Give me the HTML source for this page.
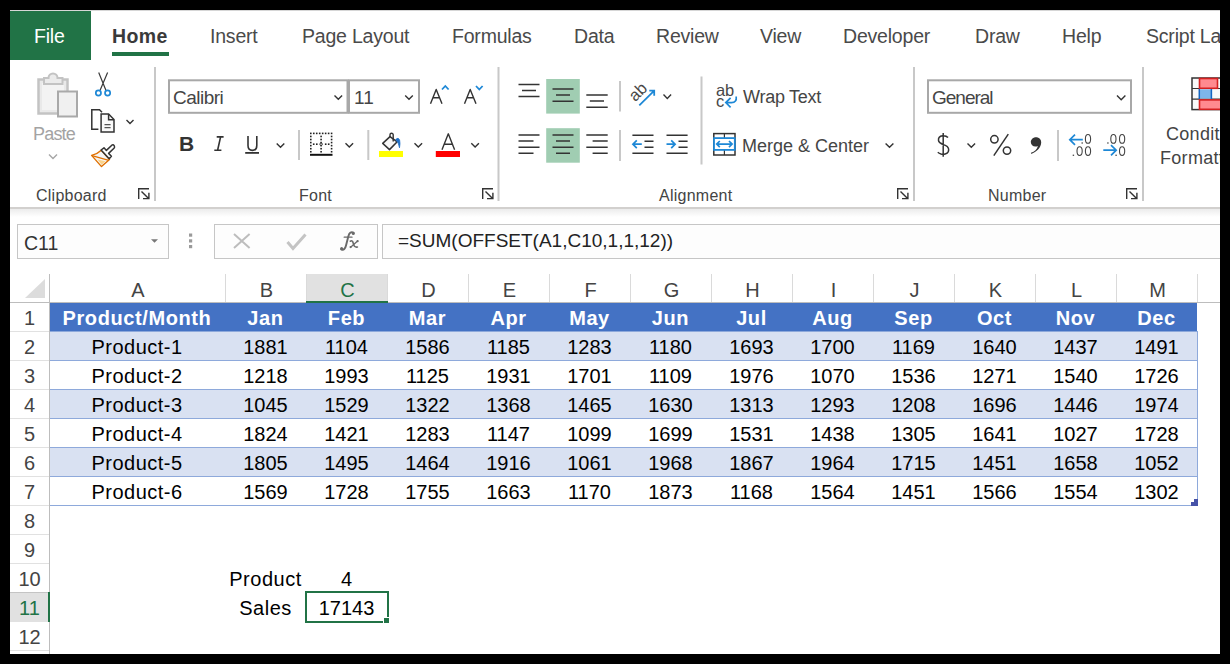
<!DOCTYPE html>
<html><head><meta charset="utf-8">
<style>
*{margin:0;padding:0;box-sizing:border-box}
html,body{width:1230px;height:664px;overflow:hidden;background:#000}
body{font-family:"Liberation Sans",sans-serif;position:relative}
.a{position:absolute;white-space:nowrap}
#app{position:absolute;left:10px;top:10px;width:1210px;height:644px;background:#fff;overflow:hidden}
.tab{position:absolute;white-space:nowrap;top:25px;font-size:19.5px;letter-spacing:-0.2px;color:#4a4a4a;line-height:22px}
.glabel{position:absolute;white-space:nowrap;top:187px;font-size:16px;letter-spacing:0.25px;color:#444;line-height:18px}
.sep{position:absolute;width:2px;background:#c8c8c8}
.cell{position:absolute;font-size:20px;line-height:33px;text-align:center;color:#000}
.ch{position:absolute;top:274px;height:28px;font-size:20px;line-height:32px;text-align:center;color:#444;border-left:1px solid #dadada}
.rh{position:absolute;left:10px;width:39px;height:29px;font-size:20px;line-height:30px;text-align:center;color:#444;border-top:1px solid #e1e1e1}
</style></head><body>
<div id="app"></div>
<!-- top strip -->
<div class="a" style="left:10px;top:10px;width:1210px;height:1px;background:#d6d6d6"></div>
<!-- File tab -->
<div class="a" style="left:10px;top:11px;width:81px;height:49px;background:#217346"></div>
<div class="tab" style="left:34px;color:#fff">File</div>
<div class="tab" style="left:112px;font-weight:bold;color:#3a3a3a;letter-spacing:0.4px">Home</div>
<div class="a" style="left:112px;top:52px;width:57px;height:4px;background:#217346"></div>
<div class="tab" style="left:210px">Insert</div>
<div class="tab" style="left:302px">Page Layout</div>
<div class="tab" style="left:452px">Formulas</div>
<div class="tab" style="left:574px">Data</div>
<div class="tab" style="left:656px">Review</div>
<div class="tab" style="left:760px">View</div>
<div class="tab" style="left:843px">Developer</div>
<div class="tab" style="left:975px">Draw</div>
<div class="tab" style="left:1062px">Help</div>
<div class="tab" style="left:1146px">Script Lab</div>

<!-- ribbon bottom -->
<div class="a" style="left:10px;top:207px;width:1210px;height:2px;background:#d2d0ce"></div>
<div class="a" style="left:10px;top:209px;width:1210px;height:8px;background:linear-gradient(#ececec,#fff)"></div>

<!--RIBBON-->
<svg class="a" style="left:0;top:0" width="1220" height="270" viewBox="0 0 1220 270">
<g fill="none" stroke-linecap="butt">
<!-- paste -->
<rect x="38.5" y="79.5" width="29" height="34" fill="#e9e9e9" stroke="#c3c3c3" stroke-width="2.5"/>
<rect x="42" y="83" width="22" height="27" fill="#f3f3f3"/>
<path d="M44 84 V78 H48.5 A4.5 4.5 0 0 1 57.5 78 H62.5 V84 Z" fill="#ebebeb" stroke="#c3c3c3" stroke-width="2"/>
<rect x="58" y="91.5" width="19" height="25" fill="#f0f0f0" stroke="#a9a9a9" stroke-width="2"/>
<path d="M49 154.5 L53 158.5 L57 154.5" stroke="#a6a6a6" stroke-width="1.4"/>
<!-- scissors -->
<path d="M98.7 72.5 L106 90.5 M107.6 72.5 L100 90.5" stroke="#3a3a3a" stroke-width="1.2"/>
<circle cx="98.4" cy="93" r="2.6" stroke="#1e88d6" stroke-width="1.7"/>
<circle cx="107.6" cy="93" r="2.6" stroke="#1e88d6" stroke-width="1.7"/>
<!-- copy -->
<path d="M98.4 129.2 H91.8 V109.8 H99.5 L102 112.3" stroke="#333" stroke-width="1.5"/>
<path d="M101.1 114 H108.6 L114 119.5 V132 H101.1 Z" fill="#fafafa" stroke="#333" stroke-width="1.5"/>
<path d="M108.6 114 V119.7 H114" stroke="#333" stroke-width="1.5"/>
<path d="M104.5 124.7 H110.6 M104.5 127.7 H110.6" stroke="#555" stroke-width="1.2"/>
<path d="M126.5 120 L130 123.5 L133.5 120" stroke="#333" stroke-width="1.4"/>
<!-- format painter -->
<path d="M101.3 150.3 C98.5 153 95.5 154.6 91.6 155.4 L101.5 166.6 L109.5 159.5 Z" fill="#f6f6f6" stroke="#e07000" stroke-width="1.4" stroke-linejoin="round"/>
<path d="M97.5 159.4 L105.5 161.3 L101.6 164.8 Z" fill="#fbd38a"/>
<path d="M92 155.7 L108.8 160.3" stroke="#e07000" stroke-width="1.3"/>
<path d="M101.1 150 L104 147.8 L106.4 150.4 L111.8 145.2 Q113.2 144.2 114.3 145.8 Q115 147 114 148.2 L108.6 153.4 L111.4 156.2 L109.2 158.8 Z" fill="#fff" stroke="#333" stroke-width="1.5" stroke-linejoin="round"/>
<!-- launchers -->
<g stroke="#333" stroke-width="1.4">
<path d="M138.7 199 V188.7 H149 M141.5 191.5 L148.6 198.6 M143 198.6 H148.9 V192.7"/>
<path d="M482.7 199 V188.7 H493 M485.5 191.5 L492.6 198.6 M487 198.6 H492.9 V192.7"/>
<path d="M897.7 199 V188.7 H908 M900.5 191.5 L907.6 198.6 M902 198.6 H907.9 V192.7"/>
<path d="M1126.7 199 V188.7 H1137 M1129.5 191.5 L1136.6 198.6 M1131 198.6 H1136.9 V192.7"/>
</g>
<!-- separators -->
<g fill="#c8c8c8">
<rect x="154" y="67" width="2" height="134"/>
<rect x="497.5" y="67" width="2" height="134"/>
<rect x="913" y="67" width="2" height="134"/>
<rect x="1142" y="67" width="2" height="134"/>
<rect x="298" y="130" width="2" height="30"/>
<rect x="367.3" y="130" width="2" height="30"/>
<rect x="619" y="81" width="2" height="30.5"/>
<rect x="619" y="130" width="2" height="31"/>
<rect x="700.5" y="76.5" width="2" height="88"/>
<rect x="1057" y="130" width="2" height="31"/>
</g>
<!-- font boxes -->
<rect x="169" y="80.3" width="178.5" height="32.5" fill="#fff" stroke="#a8a8a8" stroke-width="2"/>
<rect x="349" y="80.3" width="70" height="32.5" fill="#fff" stroke="#a8a8a8" stroke-width="2"/>
<path d="M334.5 95.5 L338.3 99.3 L342.1 95.5" stroke="#333" stroke-width="1.4"/>
<path d="M405.2 95.5 L409 99.3 L412.8 95.5" stroke="#333" stroke-width="1.4"/>
<!-- grow / shrink -->
<path d="M430.5 103.8 L436.2 89.5 L442 103.8 M432.8 97.8 H439.6" stroke="#333" stroke-width="1.4" stroke-linejoin="round"/>
<path d="M442 89.5 L445.3 86 L448.6 89.5" stroke="#1e88d6" stroke-width="1.8"/>
<path d="M464.5 103.8 L470.2 89.5 L476 103.8 M466.8 97.8 H473.6" stroke="#333" stroke-width="1.4" stroke-linejoin="round"/>
<path d="M476 86 L479.3 89.5 L482.6 86" stroke="#1e88d6" stroke-width="1.8"/>
<!-- U chevron -->
<path d="M245.2 152.9 H259" stroke="#333" stroke-width="1.8"/>
<path d="M276.7 143.5 L280.5 147.3 L284.3 143.5" stroke="#333" stroke-width="1.4"/>
<!-- I U -->
<path d="M216.7 136.9 H223.6 M214.3 150.2 H221.4 M220.6 136.9 L217.6 150.2" stroke="#333" stroke-width="1.6"/>
<path d="M248 136 V145.5 Q248 150.4 252.4 150.4 Q256.8 150.4 256.8 145.5 V136" stroke="#333" stroke-width="1.6"/>
<!-- $ % , -->
<path d="M948 137.6 C946.5 135.8 944.5 135.5 942.5 135.7 C939.5 136 938.3 138.2 938.5 140.4 C938.8 143.3 942.5 144.2 945.3 145.4 C948.6 146.8 949.2 149.5 948.3 151.6 C947.2 154 943.5 154.6 941 154 C939.5 153.6 938.5 153 937.8 152.3 M943.2 132.9 V156.8" stroke="#333" stroke-width="1.5"/>
<circle cx="994.4" cy="139.3" r="3.7" stroke="#333" stroke-width="1.5"/>
<circle cx="1007" cy="150.6" r="3.7" stroke="#333" stroke-width="1.5"/>
<path d="M1008.3 134.2 L993.8 155.6" stroke="#333" stroke-width="1.5"/>
<path d="M1031.3 154 C1036.5 151.8 1041 148 1041.2 142.5 C1041.3 139.3 1039 137.2 1036 137.2 C1033 137.2 1030.8 139.4 1030.8 142 C1030.8 144.6 1032.8 146.5 1035.4 146.5 C1036.4 146.5 1037.2 146.3 1037.9 145.9 C1037.2 149.2 1034.7 151.5 1031 152.8 Z" fill="#333" stroke="none"/>
<!-- borders -->
<g fill="#222" stroke="none"><rect x="310.00" y="132.60" width="1.6" height="1.6"/><rect x="310.00" y="135.66" width="1.6" height="1.6"/><rect x="310.00" y="138.72" width="1.6" height="1.6"/><rect x="310.00" y="141.78" width="1.6" height="1.6"/><rect x="310.00" y="144.84" width="1.6" height="1.6"/><rect x="310.00" y="147.90" width="1.6" height="1.6"/><rect x="310.00" y="150.96" width="1.6" height="1.6"/><rect x="312.90" y="143.40" width="1.6" height="1.6"/><rect x="312.97" y="132.60" width="1.6" height="1.6"/><rect x="315.94" y="132.60" width="1.6" height="1.6"/><rect x="316.00" y="143.40" width="1.6" height="1.6"/><rect x="318.91" y="132.60" width="1.6" height="1.6"/><rect x="320.30" y="135.66" width="1.6" height="1.6"/><rect x="320.30" y="138.72" width="1.6" height="1.6"/><rect x="320.30" y="141.78" width="1.6" height="1.6"/><rect x="320.30" y="144.84" width="1.6" height="1.6"/><rect x="320.30" y="147.90" width="1.6" height="1.6"/><rect x="320.30" y="150.96" width="1.6" height="1.6"/><rect x="321.88" y="132.60" width="1.6" height="1.6"/><rect x="324.85" y="132.60" width="1.6" height="1.6"/><rect x="324.90" y="143.40" width="1.6" height="1.6"/><rect x="327.82" y="132.60" width="1.6" height="1.6"/><rect x="327.90" y="143.40" width="1.6" height="1.6"/><rect x="330.79" y="132.60" width="1.6" height="1.6"/><rect x="330.79" y="135.66" width="1.6" height="1.6"/><rect x="330.79" y="138.72" width="1.6" height="1.6"/><rect x="330.79" y="141.78" width="1.6" height="1.6"/><rect x="330.79" y="144.84" width="1.6" height="1.6"/><rect x="330.79" y="147.90" width="1.6" height="1.6"/><rect x="330.79" y="150.96" width="1.6" height="1.6"/></g>
<circle cx="321.1" cy="144.2" r="1.3" fill="none" stroke="#333" stroke-width="0.9"/>
<path d="M310 154.8 H332.5" stroke="#111" stroke-width="2"/>
<path d="M345.5 143.3 L349.3 147.1 L353.1 143.3" stroke="#333" stroke-width="1.4"/>
<!-- fill color -->
<path d="M382.7 143.4 L390 136.6 L397.2 141.8 L389.5 149.6 Z" fill="#f7f7f7" stroke="#333" stroke-width="1.5" stroke-linejoin="round"/>
<path d="M390 137 V134.8 A1.6 1.6 0 0 1 393.2 134.8 V141.4" stroke="#333" stroke-width="1.4"/>
<path d="M395.6 139.6 Q398.3 136.8 399.6 139.8 Q400.4 143.5 399.5 147.8 Q398.6 142 395.6 139.6 Z" fill="#1e6fc8" stroke="#1e6fc8" stroke-width="0.8"/>
<rect x="379" y="151" width="24" height="6" fill="#ffff00"/>
<path d="M414.5 143.3 L418.3 147.1 L422.1 143.3" stroke="#333" stroke-width="1.4"/>
<!-- font color -->
<path d="M442 149.7 L448.3 133.8 L454.6 149.7 M444.3 144.3 H452.3" stroke="#333" stroke-width="1.4" stroke-linejoin="round"/>
<rect x="435.8" y="151" width="24.2" height="6" fill="#ff0000"/>
<path d="M471.3 143.3 L475.1 147.1 L478.9 143.3" stroke="#333" stroke-width="1.4"/>
<!-- alignment top row -->
<rect x="546.2" y="79" width="33.6" height="34.6" fill="#a0cdb2"/>
<rect x="546.2" y="128.2" width="33.6" height="34.5" fill="#a0cdb2"/>
<g stroke="#333" stroke-width="1.5">
<path d="M518.5 84.6 H539.5 M522 90.6 H536 M518.5 96.6 H539.5"/>
<path d="M552.5 89 H573.5 M556 95 H570 M552.5 101.2 H573.5"/>
<path d="M586.3 94.9 H607.7 M589.8 100.9 H604 M586.3 107.2 H607.7"/>
<path d="M518.5 135 H539.5 M518.5 141 H533.5 M518.5 147.2 H539.5 M518.5 153.2 H533.5"/>
<path d="M552.5 135 H573.5 M556 141 H570 M552.5 147.2 H573.5 M556 153.2 H570"/>
<path d="M586.3 135 H607.7 M592.6 141 H607.7 M586.3 147.2 H607.7 M592.6 153.2 H607.7"/>
<path d="M632.4 135.2 H653.5 M644.5 141.3 H653.5 M644.5 147.3 H653.5 M632.4 153.2 H653.5"/>
<path d="M666.5 135.2 H687.6 M678.5 141.3 H687.6 M678.5 147.3 H687.6 M666.5 153.2 H687.6"/>
</g>
<g stroke="#1e88d6" stroke-width="1.7">
<path d="M633 144.2 H641.8 M636.8 140.3 L632.9 144.2 L636.8 148.1"/>
<path d="M666.5 144.2 H675 M671.2 140.3 L675.1 144.2 L671.2 148.1"/>
</g>
<!-- orientation -->
<text x="0" y="0" transform="translate(635.3,102.3) rotate(-45)" font-family="Liberation Sans" font-size="16.5" fill="#484848" stroke="none">ab</text>
<path d="M639.3 105.3 L654 90.8 M649.3 90.6 H654.2 V95.7" stroke="#1e88d6" stroke-width="1.8"/>
<path d="M663.5 94.6 L667.3 98.4 L671.1 94.6" stroke="#333" stroke-width="1.4"/>
<!-- wrap text -->
<text x="716" y="95.6" font-family="Liberation Sans" font-size="16.5" letter-spacing="-0.2" fill="#484848" stroke="none">ab</text>
<text x="716" y="106.7" font-family="Liberation Sans" font-size="16.5" fill="#484848" stroke="none">c</text>
<path d="M736.2 96.5 Q737 102.6 731.5 102.6 H726 M730.6 97.8 L725.8 102.6 L730.6 107.3" stroke="#1e88d6" stroke-width="1.7"/>
<!-- merge -->
<rect x="713.8" y="133.6" width="21.2" height="21.4" fill="#fff" stroke="#333" stroke-width="1.5"/>
<path d="M724.4 133.6 V155" stroke="#333" stroke-width="1.2"/>
<rect x="714" y="138.1" width="20.8" height="11.8" fill="#fff" stroke="#1e88d6" stroke-width="1.8"/>
<path d="M716.8 144.1 H732 M719.8 141 L716.7 144.1 L719.8 147.2 M729 141 L732.1 144.1 L729 147.2" stroke="#1e88d6" stroke-width="1.7"/>
<path d="M885.6 143.4 L889.5 147.3 L893.4 143.4" stroke="#333" stroke-width="1.4"/>
<!-- number -->
<rect x="928" y="80.3" width="203" height="32.5" fill="#fff" stroke="#a8a8a8" stroke-width="2"/>
<path d="M1117 95.5 L1121.2 99.7 L1125.4 95.5" stroke="#333" stroke-width="1.4"/>
<path d="M967.5 143.5 L971.3 147.3 L975.1 143.5" stroke="#333" stroke-width="1.4"/>
<g stroke="#1e88d6" stroke-width="1.7">
<path d="M1069.8 139.7 H1082.8 M1075 134.6 L1069.8 139.7 L1075 144.8"/>
<path d="M1103.3 150.2 H1116.2 M1111 145.1 L1116.2 150.2 L1111 155.3"/>
</g>
<g stroke="#444" stroke-width="1.1" fill="none">
<ellipse cx="1088" cy="138.9" rx="2.6" ry="4.4"/>
<ellipse cx="1079.6" cy="151.1" rx="2.6" ry="4.4"/>
<ellipse cx="1088" cy="151.1" rx="2.6" ry="4.4"/>
<ellipse cx="1113.4" cy="138.9" rx="2.6" ry="4.4"/>
<ellipse cx="1122.1" cy="138.9" rx="2.6" ry="4.4"/>
<ellipse cx="1122.1" cy="151.1" rx="2.6" ry="4.4"/>
</g>
<g fill="#555" stroke="none">
<rect x="1081.5" y="142.3" width="1.4" height="1.4"/>
<rect x="1072.7" y="154.6" width="1.4" height="1.4"/>
<rect x="1107.2" y="142.3" width="1.4" height="1.4"/>
<rect x="1115.4" y="154.6" width="1.4" height="1.4"/>
</g>
<!-- CF -->
<rect x="1192" y="78" width="30" height="31.6" fill="#f8f8f8" stroke="#333" stroke-width="1.5"/>
<path d="M1192 88.5 H1222 M1192 99.2 H1222" stroke="#333" stroke-width="1.2"/>
<rect x="1199.5" y="78.5" width="18" height="9.8" fill="#ff8a8f" stroke="#d42020" stroke-width="1.6"/>
<rect x="1199.3" y="89.3" width="12" height="9.2" fill="#7db6ea" stroke="none"/>
<path d="M1199.3 89 V99 M1211.4 89 V99" stroke="#1565c0" stroke-width="1.5"/>
<rect x="1199.5" y="99.9" width="24" height="9.4" fill="#ff8a8f" stroke="#d42020" stroke-width="1.6"/>
</g>
</svg>
<div class="a" style="left:173px;top:87px;font-size:19px;letter-spacing:-0.5px;color:#454545">Calibri</div>
<div class="a" style="left:354px;top:87px;font-size:19px;color:#454545">11</div>
<div class="a" style="left:179px;top:132px;font-size:21px;font-weight:bold;color:#333">B</div>
<div class="a" style="left:33px;top:124px;font-size:18px;letter-spacing:-0.8px;color:#a3a3a3">Paste</div>
<div class="a" style="left:743px;top:87px;font-size:18px;letter-spacing:-0.25px;color:#454545">Wrap Text</div>
<div class="a" style="left:742px;top:136px;font-size:18px;color:#454545">Merge &amp; Center</div>
<div class="a" style="left:932px;top:87px;font-size:19px;letter-spacing:-1px;color:#454545">General</div>
<div class="a" style="left:1166px;top:124px;font-size:18px;letter-spacing:0.3px;color:#444">Conditional</div>
<div class="a" style="left:1160px;top:148px;font-size:18px;letter-spacing:0.3px;color:#444">Formatting</div>
<!--/RIBBON-->
<!-- group labels -->
<div class="glabel" style="left:36px">Clipboard</div>
<div class="glabel" style="left:299px">Font</div>
<div class="glabel" style="left:659px">Alignment</div>
<div class="glabel" style="left:988px">Number</div>

<!-- formula bar -->
<div class="a" style="left:17px;top:224px;width:152px;height:35px;border:1px solid #c6c6c6;background:#fdfdfd"></div>
<div class="a" style="left:24px;top:232px;font-size:19.5px;color:#333">C11</div>
<div class="a" style="left:214px;top:224px;width:164px;height:35px;border:1px solid #c6c6c6;background:#fdfdfd"></div>
<div class="a" style="left:382px;top:224px;width:845px;height:35px;border:1px solid #c6c6c6;background:#fdfdfd"></div>
<div class="a" style="left:398px;top:230px;font-size:19px;color:#222">=SUM(OFFSET(A1,C10,1,1,12))</div>

<!-- sheet -->
<!--SHEET-->
<div class="a" style="left:10px;top:274px;width:39px;height:28px;background:#fff"></div>
<svg class="a" style="left:20px;top:278px" width="26" height="22"><polygon points="25,1 25,20 5,20" fill="#dcdcdc"/></svg>
<div class="ch" style="left:49px;width:177px;">A</div>
<div class="ch" style="left:225px;width:82px;">B</div>
<div class="ch" style="left:306px;width:82px;background:#e1e1e1;color:#217346;">C</div>
<div class="ch" style="left:387px;width:82px;">D</div>
<div class="ch" style="left:468px;width:82px;">E</div>
<div class="ch" style="left:549px;width:82px;">F</div>
<div class="ch" style="left:630px;width:82px;">G</div>
<div class="ch" style="left:711px;width:82px;">H</div>
<div class="ch" style="left:792px;width:82px;">I</div>
<div class="ch" style="left:873px;width:82px;">J</div>
<div class="ch" style="left:954px;width:82px;">K</div>
<div class="ch" style="left:1035px;width:82px;">L</div>
<div class="ch" style="left:1116px;width:82px;">M</div>
<div class="a" style="left:1197px;top:274px;width:1px;height:28px;background:#dadada"></div>
<div class="a" style="left:10px;top:302px;width:1210px;height:1px;background:#bdbdbd"></div>
<div class="a" style="left:306px;top:301px;width:82px;height:2px;background:#217346"></div>
<div class="a" style="left:49px;top:274px;width:1px;height:380px;background:#bdbdbd"></div>
<div class="rh" style="top:302px;border-top-color:#bdbdbd;">1</div>
<div class="rh" style="top:331px;">2</div>
<div class="rh" style="top:360px;">3</div>
<div class="rh" style="top:389px;">4</div>
<div class="rh" style="top:418px;">5</div>
<div class="rh" style="top:447px;">6</div>
<div class="rh" style="top:476px;">7</div>
<div class="rh" style="top:505px;">8</div>
<div class="rh" style="top:534px;">9</div>
<div class="rh" style="top:563px;">10</div>
<div class="rh" style="top:592px;background:#e1e1e1;color:#217346;border-top-color:#c4c4c4;border-bottom:1px solid #c4c4c4;height:30px;">11</div>
<div class="rh" style="top:621px;">12</div>
<div class="a" style="left:10px;top:650px;width:39px;height:1px;background:#e1e1e1"></div>
<div class="a" style="left:48px;top:592px;width:2px;height:30px;background:#217346"></div>
<div class="a" style="left:50px;top:303px;width:1147px;height:28px;background:#4472c4"></div>
<div class="cell" style="left:49px;top:302px;width:176px;color:#fff;font-weight:bold;letter-spacing:0.6px;">Product/Month</div>
<div class="cell" style="left:225px;top:302px;width:81px;color:#fff;font-weight:bold;letter-spacing:0.6px;">Jan</div>
<div class="cell" style="left:306px;top:302px;width:81px;color:#fff;font-weight:bold;letter-spacing:0.6px;">Feb</div>
<div class="cell" style="left:387px;top:302px;width:81px;color:#fff;font-weight:bold;letter-spacing:0.6px;">Mar</div>
<div class="cell" style="left:468px;top:302px;width:81px;color:#fff;font-weight:bold;letter-spacing:0.6px;">Apr</div>
<div class="cell" style="left:549px;top:302px;width:81px;color:#fff;font-weight:bold;letter-spacing:0.6px;">May</div>
<div class="cell" style="left:630px;top:302px;width:81px;color:#fff;font-weight:bold;letter-spacing:0.6px;">Jun</div>
<div class="cell" style="left:711px;top:302px;width:81px;color:#fff;font-weight:bold;letter-spacing:0.6px;">Jul</div>
<div class="cell" style="left:792px;top:302px;width:81px;color:#fff;font-weight:bold;letter-spacing:0.6px;">Aug</div>
<div class="cell" style="left:873px;top:302px;width:81px;color:#fff;font-weight:bold;letter-spacing:0.6px;">Sep</div>
<div class="cell" style="left:954px;top:302px;width:81px;color:#fff;font-weight:bold;letter-spacing:0.6px;">Oct</div>
<div class="cell" style="left:1035px;top:302px;width:81px;color:#fff;font-weight:bold;letter-spacing:0.6px;">Nov</div>
<div class="cell" style="left:1116px;top:302px;width:81px;color:#fff;font-weight:bold;letter-spacing:0.6px;">Dec</div>
<div class="a" style="left:50px;top:332px;width:1147px;height:28px;background:#d9e1f2"></div>
<div class="a" style="left:50px;top:331px;width:1147px;height:1px;background:#8ea9db"></div>
<div class="cell" style="left:49px;top:331px;width:176px;letter-spacing:0.5px;">Product-1</div>
<div class="cell" style="left:225px;top:331px;width:81px;">1881</div>
<div class="cell" style="left:306px;top:331px;width:81px;">1104</div>
<div class="cell" style="left:387px;top:331px;width:81px;">1586</div>
<div class="cell" style="left:468px;top:331px;width:81px;">1185</div>
<div class="cell" style="left:549px;top:331px;width:81px;">1283</div>
<div class="cell" style="left:630px;top:331px;width:81px;">1180</div>
<div class="cell" style="left:711px;top:331px;width:81px;">1693</div>
<div class="cell" style="left:792px;top:331px;width:81px;">1700</div>
<div class="cell" style="left:873px;top:331px;width:81px;">1169</div>
<div class="cell" style="left:954px;top:331px;width:81px;">1640</div>
<div class="cell" style="left:1035px;top:331px;width:81px;">1437</div>
<div class="cell" style="left:1116px;top:331px;width:81px;">1491</div>
<div class="a" style="left:50px;top:361px;width:1147px;height:28px;background:#ffffff"></div>
<div class="a" style="left:50px;top:360px;width:1147px;height:1px;background:#8ea9db"></div>
<div class="cell" style="left:49px;top:360px;width:176px;letter-spacing:0.5px;">Product-2</div>
<div class="cell" style="left:225px;top:360px;width:81px;">1218</div>
<div class="cell" style="left:306px;top:360px;width:81px;">1993</div>
<div class="cell" style="left:387px;top:360px;width:81px;">1125</div>
<div class="cell" style="left:468px;top:360px;width:81px;">1931</div>
<div class="cell" style="left:549px;top:360px;width:81px;">1701</div>
<div class="cell" style="left:630px;top:360px;width:81px;">1109</div>
<div class="cell" style="left:711px;top:360px;width:81px;">1976</div>
<div class="cell" style="left:792px;top:360px;width:81px;">1070</div>
<div class="cell" style="left:873px;top:360px;width:81px;">1536</div>
<div class="cell" style="left:954px;top:360px;width:81px;">1271</div>
<div class="cell" style="left:1035px;top:360px;width:81px;">1540</div>
<div class="cell" style="left:1116px;top:360px;width:81px;">1726</div>
<div class="a" style="left:50px;top:390px;width:1147px;height:28px;background:#d9e1f2"></div>
<div class="a" style="left:50px;top:389px;width:1147px;height:1px;background:#8ea9db"></div>
<div class="cell" style="left:49px;top:389px;width:176px;letter-spacing:0.5px;">Product-3</div>
<div class="cell" style="left:225px;top:389px;width:81px;">1045</div>
<div class="cell" style="left:306px;top:389px;width:81px;">1529</div>
<div class="cell" style="left:387px;top:389px;width:81px;">1322</div>
<div class="cell" style="left:468px;top:389px;width:81px;">1368</div>
<div class="cell" style="left:549px;top:389px;width:81px;">1465</div>
<div class="cell" style="left:630px;top:389px;width:81px;">1630</div>
<div class="cell" style="left:711px;top:389px;width:81px;">1313</div>
<div class="cell" style="left:792px;top:389px;width:81px;">1293</div>
<div class="cell" style="left:873px;top:389px;width:81px;">1208</div>
<div class="cell" style="left:954px;top:389px;width:81px;">1696</div>
<div class="cell" style="left:1035px;top:389px;width:81px;">1446</div>
<div class="cell" style="left:1116px;top:389px;width:81px;">1974</div>
<div class="a" style="left:50px;top:419px;width:1147px;height:28px;background:#ffffff"></div>
<div class="a" style="left:50px;top:418px;width:1147px;height:1px;background:#8ea9db"></div>
<div class="cell" style="left:49px;top:418px;width:176px;letter-spacing:0.5px;">Product-4</div>
<div class="cell" style="left:225px;top:418px;width:81px;">1824</div>
<div class="cell" style="left:306px;top:418px;width:81px;">1421</div>
<div class="cell" style="left:387px;top:418px;width:81px;">1283</div>
<div class="cell" style="left:468px;top:418px;width:81px;">1147</div>
<div class="cell" style="left:549px;top:418px;width:81px;">1099</div>
<div class="cell" style="left:630px;top:418px;width:81px;">1699</div>
<div class="cell" style="left:711px;top:418px;width:81px;">1531</div>
<div class="cell" style="left:792px;top:418px;width:81px;">1438</div>
<div class="cell" style="left:873px;top:418px;width:81px;">1305</div>
<div class="cell" style="left:954px;top:418px;width:81px;">1641</div>
<div class="cell" style="left:1035px;top:418px;width:81px;">1027</div>
<div class="cell" style="left:1116px;top:418px;width:81px;">1728</div>
<div class="a" style="left:50px;top:448px;width:1147px;height:28px;background:#d9e1f2"></div>
<div class="a" style="left:50px;top:447px;width:1147px;height:1px;background:#8ea9db"></div>
<div class="cell" style="left:49px;top:447px;width:176px;letter-spacing:0.5px;">Product-5</div>
<div class="cell" style="left:225px;top:447px;width:81px;">1805</div>
<div class="cell" style="left:306px;top:447px;width:81px;">1495</div>
<div class="cell" style="left:387px;top:447px;width:81px;">1464</div>
<div class="cell" style="left:468px;top:447px;width:81px;">1916</div>
<div class="cell" style="left:549px;top:447px;width:81px;">1061</div>
<div class="cell" style="left:630px;top:447px;width:81px;">1968</div>
<div class="cell" style="left:711px;top:447px;width:81px;">1867</div>
<div class="cell" style="left:792px;top:447px;width:81px;">1964</div>
<div class="cell" style="left:873px;top:447px;width:81px;">1715</div>
<div class="cell" style="left:954px;top:447px;width:81px;">1451</div>
<div class="cell" style="left:1035px;top:447px;width:81px;">1658</div>
<div class="cell" style="left:1116px;top:447px;width:81px;">1052</div>
<div class="a" style="left:50px;top:477px;width:1147px;height:28px;background:#ffffff"></div>
<div class="a" style="left:50px;top:476px;width:1147px;height:1px;background:#8ea9db"></div>
<div class="cell" style="left:49px;top:476px;width:176px;letter-spacing:0.5px;">Product-6</div>
<div class="cell" style="left:225px;top:476px;width:81px;">1569</div>
<div class="cell" style="left:306px;top:476px;width:81px;">1728</div>
<div class="cell" style="left:387px;top:476px;width:81px;">1755</div>
<div class="cell" style="left:468px;top:476px;width:81px;">1663</div>
<div class="cell" style="left:549px;top:476px;width:81px;">1170</div>
<div class="cell" style="left:630px;top:476px;width:81px;">1873</div>
<div class="cell" style="left:711px;top:476px;width:81px;">1168</div>
<div class="cell" style="left:792px;top:476px;width:81px;">1564</div>
<div class="cell" style="left:873px;top:476px;width:81px;">1451</div>
<div class="cell" style="left:954px;top:476px;width:81px;">1566</div>
<div class="cell" style="left:1035px;top:476px;width:81px;">1554</div>
<div class="cell" style="left:1116px;top:476px;width:81px;">1302</div>
<div class="a" style="left:50px;top:505px;width:1147px;height:1px;background:#8ea9db"></div>
<div class="a" style="left:1197px;top:331px;width:1px;height:175px;background:#8ea9db"></div>
<div class="a" style="left:1191px;top:502px;width:7px;height:4px;background:#4652a8"></div>
<div class="a" style="left:1194px;top:499px;width:4px;height:4px;background:#4652a8"></div>
<div class="cell" style="left:225px;top:563px;width:81px;letter-spacing:0.5px">Product</div>
<div class="cell" style="left:306px;top:563px;width:81px">4</div>
<div class="cell" style="left:225px;top:592px;width:81px;letter-spacing:0.5px">Sales</div>
<div class="cell" style="left:306px;top:592px;width:81px">17143</div>
<div class="a" style="left:305px;top:591px;width:84px;height:32px;border:2px solid #217346"></div>
<div class="a" style="left:383px;top:617px;width:7px;height:7px;background:#217346;border:1px solid #fff"></div>
<!--/SHEET-->
<!--FBAR-->
<svg class="a" style="left:0;top:215px" width="400" height="50" viewBox="0 215 400 50">
<path d="M151 239.3 H158 L154.5 242.8 Z" fill="#777"/>
<rect x="189" y="233.5" width="3.2" height="3.2" fill="#9a9a9a"/>
<rect x="189" y="239.3" width="3.2" height="3.2" fill="#9a9a9a"/>
<rect x="189" y="245" width="3.2" height="3.2" fill="#9a9a9a"/>
<path d="M234 234 L249.6 248 M249.6 234 L234 248" stroke="#bdbdbd" stroke-width="2" fill="none"/>
<path d="M287.5 242 L293 248.5 L305.5 234.5" stroke="#c4c4c4" stroke-width="3" fill="none"/>
<g fill="none" stroke="#6a6a6a" stroke-linecap="round">
<path d="M341.2 249.3 C343.8 250.6 345.3 248.5 346 245.5 L348.3 236.5 C349.2 233 350.8 231.6 353.6 232.6" stroke-width="1.9"/>
<circle cx="341.6" cy="248.4" r="1.5" fill="#6a6a6a" stroke="none"/>
<circle cx="353.3" cy="233.6" r="1.5" fill="#6a6a6a" stroke="none"/>
<path d="M344.2 237.2 H352" stroke-width="1.3"/>
<path d="M350.3 241.2 Q352.6 239.8 353.3 243.4 Q354.2 247.8 357.4 247" stroke-width="1.6"/>
<path d="M357.6 241 L350.6 247.3" stroke-width="1.3"/>
<circle cx="357.6" cy="241.2" r="1.1" fill="#6a6a6a" stroke="none"/>
<circle cx="350.6" cy="247.1" r="1.1" fill="#6a6a6a" stroke="none"/>
</g>
</svg>
<!--/FBAR-->
<div class="a" style="left:0;top:0;width:1230px;height:10px;background:#000"></div>
<div class="a" style="left:0;top:654px;width:1230px;height:10px;background:#000"></div>
<div class="a" style="left:0;top:0;width:10px;height:664px;background:#000"></div>
<div class="a" style="left:1220px;top:0;width:10px;height:664px;background:#000"></div>
</body></html>
